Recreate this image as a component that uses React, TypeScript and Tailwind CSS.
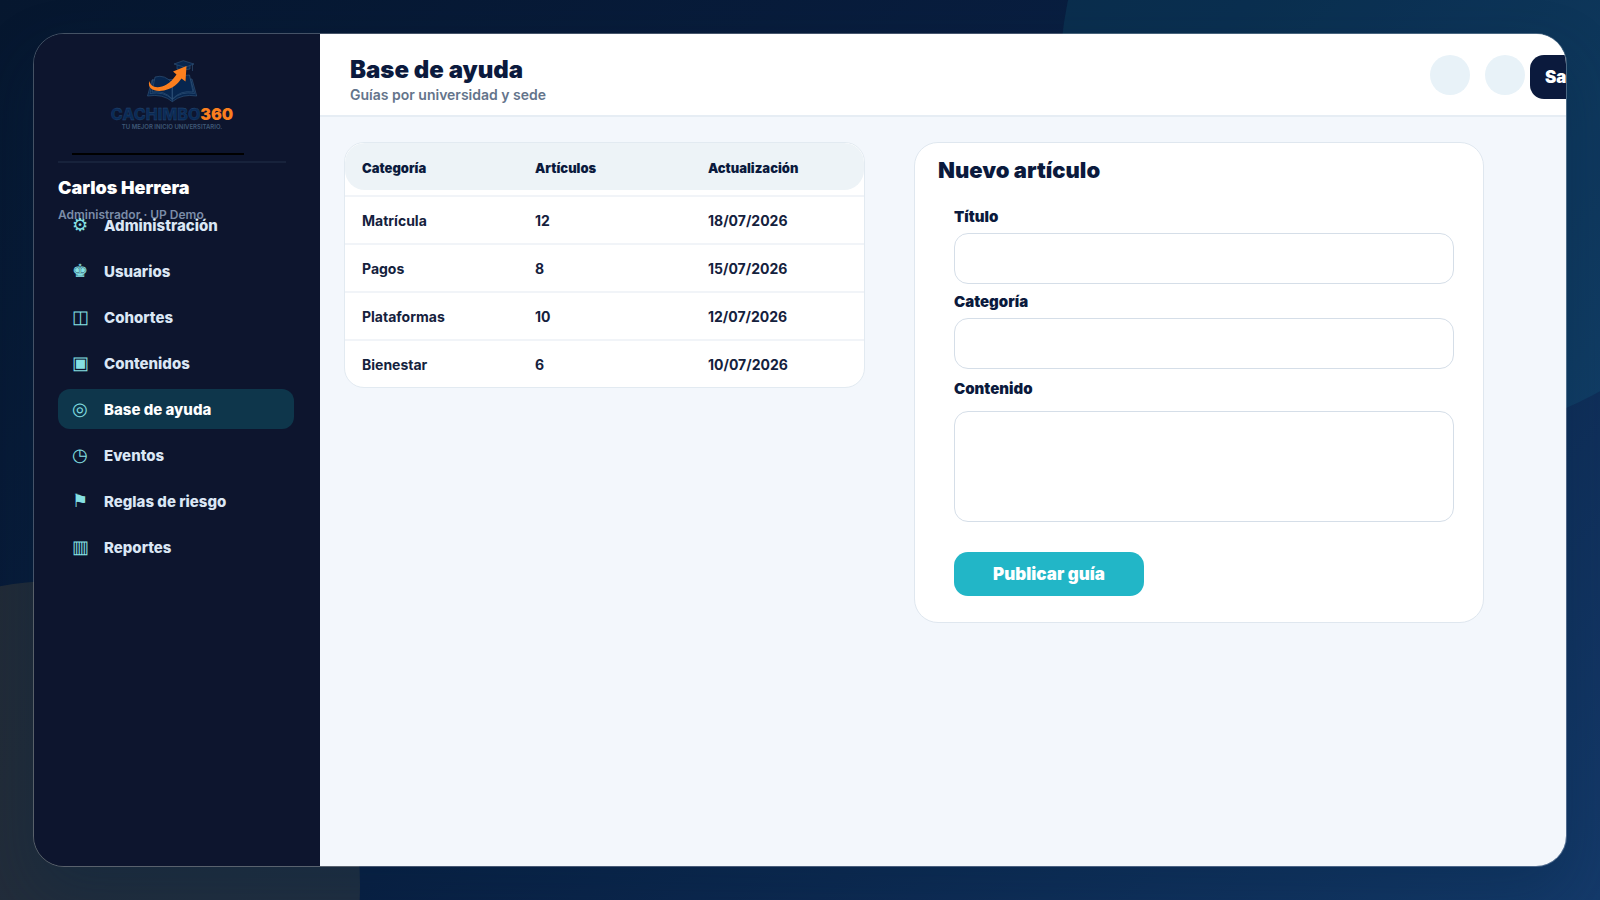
import React from "react"
import clsx from "clsx"

interface NavItem {
  icon: string
  label: string
  active?: boolean
}

interface Guide {
  category: string
  articles: number
  updated: string
}

const NAV_ITEMS: NavItem[] = [
  { icon: "⚙", label: "Administración" },
  { icon: "♚", label: "Usuarios" },
  { icon: "◫", label: "Cohortes" },
  { icon: "▣", label: "Contenidos" },
  { icon: "◎", label: "Base de ayuda", active: true },
  { icon: "◷", label: "Eventos" },
  { icon: "⚑", label: "Reglas de riesgo" },
  { icon: "▥", label: "Reportes" },
]

const GUIDES: Guide[] = [
  { category: "Matrícula", articles: 12, updated: "18/07/2026" },
  { category: "Pagos", articles: 8, updated: "15/07/2026" },
  { category: "Plataformas", articles: 10, updated: "12/07/2026" },
  { category: "Bienestar", articles: 6, updated: "10/07/2026" },
]

const Logo: React.FC = () => (
  <svg viewBox="0 0 140 80" className="h-20 w-[140px]" role="img" aria-label="Cachimbo360">
    {/* Open book */}
    <g fill="#07264f" stroke="#34577c" strokeWidth="0.6" strokeLinejoin="round">
      <path d="M50 25 L45.5 41 Q61 38.5 70.3 46.7 Q80 38.5 94.7 41 L90 24 Z" />
      <path d="M51 24 L48 38.5 Q62 36 70.3 44.5 Q79 36 92.5 38.5 L88.5 24" fill="none" />
      <path d="M53 22 Q63 19 70.3 28.3 V44 Q62 35 50 37 Z" />
      <path d="M87.5 20 Q77 20 70.3 28.3 V44 Q79 35 91 37 Z" />
      <path d="M70.3 28 V46.5" />
    </g>
    {/* Graduation cap */}
    <g fill="#07264f" stroke="#34577c" strokeWidth="0.6" strokeLinejoin="round">
      <path d="M75 10 V14 Q82 16 88 14 V10" />
      <path d="M72 9 L81.3 5.7 L92 9 L83 12.3 Z" />
      <path d="M90.5 9.5 V16" />
    </g>
    {/* Arrow */}
    <path
      d="M47.3 26 C45 34.5 53 37 62 35.5 C71 33.5 76 28.5 79.5 23.5 L83.5 26.5 L84.5 11 L71 16.5 L74.5 19.5 C70 26 66 29.5 60 31.5 C53 33.5 48.5 31 47.3 26 Z"
      fill="#fb7f1e"
    />
    <text x="70" y="64.5" textAnchor="middle" className="font-[Inter] text-[16px] font-extrabold" fill="#0a2b57">
      <tspan stroke="#2b4c74" strokeWidth="0.3">CACHIMBO</tspan>
      <tspan fill="#fb7f1e" className="font-black">360</tspan>
    </text>
    <text x="70" y="73.5" textAnchor="middle" className="font-[Inter] text-[6px] font-semibold" fill="#3f5876">
      TU MEJOR INICIO UNIVERSITARIO.
    </text>
  </svg>
)

const Sidebar: React.FC = () => (
  <aside className="w-[286px] shrink-0 bg-[#0d152e] px-6">
    <div className="h-[171px]">
      <div className="flex w-[228px] flex-col items-center border-b-2 border-[#17223b] pt-[21px]">
        <Logo />
        <div className="mt-[18px] mb-[6px] ml-[14px] h-[2px] w-[172px] self-start bg-black" />
      </div>
      <p className="mt-[11px] text-lg leading-7 font-black text-white">Carlos Herrera</p>
      <p className="mt-[3px] text-xs leading-5 font-semibold text-[#7b8ca8]">Administrador · UP Demo</p>
    </div>

    <nav className="flex w-[236px] flex-col gap-[6px]">
      {NAV_ITEMS.map((item) => (
        <a
          key={item.label}
          href="#"
          aria-current={item.active ? "page" : undefined}
          className={clsx(
            "flex h-10 items-center gap-3 rounded-xl pt-[2px] pl-3 text-[15px] font-extrabold",
            item.active ? "bg-[#0e364b] text-white" : "text-[#dbe7f5]",
          )}
        >
          <span className="w-5 pb-[3px] text-center text-[18px] font-normal text-[#85e0e4]" aria-hidden="true">
            {item.icon}
          </span>
          <span className="pl-[2px]">{item.label}</span>
        </a>
      ))}
    </nav>
  </aside>
)

const PageHeader: React.FC = () => (
  <header className="flex h-[83px] justify-between border-b-2 border-[#e6edf4] bg-white pl-[30px]">
    <div className="pt-5">
      <h1 className="text-2xl leading-8 font-black text-[#0b1a3d]">Base de ayuda</h1>
      <p className="text-sm leading-[18px] font-semibold text-[#64748b]">Guías por universidad y sede</p>
    </div>
    {/* Actions run past the right edge and are clipped by the shell */}
    <div className="flex w-[136px] shrink-0 items-start pt-[21px]">
      <button type="button" aria-label="Buscar" className="mr-[15px] size-10 shrink-0 rounded-full bg-[#e8f2f8]" />
      <button type="button" aria-label="Notificaciones" className="mr-[5px] size-10 shrink-0 rounded-full bg-[#e8f2f8]" />
      <button
        type="button"
        className="h-11 shrink-0 rounded-[14px] bg-[#0b1a3d] px-[15px] pt-[2px] text-[17px] font-black text-white"
      >
        Salir
      </button>
    </div>
  </header>
)

const GuidesTable: React.FC = () => (
  <div className="overflow-hidden rounded-[20px] border border-[#e2eaf1] bg-white">
    <table className="block w-full text-left text-[#14213d]">
      <thead className="block">
        <tr className="grid h-[47px] grid-cols-3 items-center rounded-[20px] bg-[#edf3f7] pt-[5px] text-[13px] text-[#0b1a3d]">
          <th className="pl-[17px] font-black">Categoría</th>
          <th className="pl-[17px] font-black">Artículos</th>
          <th className="pl-[17px] font-black">Actualización</th>
        </tr>
      </thead>
      <tbody className="block pt-[5px]">
        {GUIDES.map((guide) => (
          <tr
            key={guide.category}
            className="grid h-12 grid-cols-3 items-center border-t-2 border-[#f1f4f8] pt-[2px] text-sm font-bold"
          >
            <td className="pl-[17px]">{guide.category}</td>
            <td className="pl-[17px]">{guide.articles}</td>
            <td className="pl-[17px]">{guide.updated}</td>
          </tr>
        ))}
      </tbody>
    </table>
  </div>
)

const fieldClass = "block w-full rounded-[14px] border border-[#d5dee8] bg-white px-4 text-[15px] outline-none"
const labelClass = "block text-[15px] leading-5 font-black text-[#0b1a3d]"

const ArticleForm: React.FC = () => (
  <section className="rounded-3xl border border-[#dfe7ef] bg-white px-[23px] pt-[11px] pb-[26px]">
    <h2 className="text-[22px] leading-8 font-black text-[#0b1a3d]">Nuevo artículo</h2>
    <form className="pt-[21px] pr-[6px] pl-4" onSubmit={(e) => e.preventDefault()}>
      <label htmlFor="titulo" className={labelClass}>
        Título
      </label>
      <input id="titulo" type="text" className={clsx(fieldClass, "mt-[6px] h-[51px]")} />
      <label htmlFor="categoria" className={clsx(labelClass, "mt-2")}>
        Categoría
      </label>
      <input id="categoria" type="text" className={clsx(fieldClass, "mt-[6px] h-[51px]")} />
      <label htmlFor="contenido" className={clsx(labelClass, "mt-[10px]")}>
        Contenido
      </label>
      <textarea id="contenido" className={clsx(fieldClass, "mt-3 h-[111px] resize-none py-3")} />
      <button
        type="submit"
        className="mt-[30px] h-11 w-[190px] rounded-[14px] bg-[#22b6c7] pt-[2px] text-[17px] font-black text-white"
      >
        Publicar guía
      </button>
    </form>
  </section>
)

export default function App() {
  return (
    <div className="relative flex min-h-screen overflow-hidden bg-[linear-gradient(135deg,#06172f_0%,#091f42_50%,#143a6a_100%)] p-[33px] font-[Inter,sans-serif]">
      {/* Background discs */}
      <div className="absolute -top-[286px] -right-[184px] size-[724px] rounded-full bg-[#18a8b4]/12" />
      <div className="absolute -bottom-[289px] -left-[248px] size-[608px] rounded-full bg-[#e0a82e]/12" />

      <div className="relative flex flex-1 overflow-hidden rounded-[31px] border border-white/25 shadow-[0_26px_60px_rgba(0,35,65,0.3)]">
        <Sidebar />
        <main className="min-w-0 flex-1 bg-[#f3f7fc]">
          <PageHeader />
          <div className="grid grid-cols-[521fr_570fr] items-start gap-[49px] pt-[25px] pr-[82px] pl-6">
            <GuidesTable />
            <ArticleForm />
          </div>
        </main>
      </div>
    </div>
  )
}
